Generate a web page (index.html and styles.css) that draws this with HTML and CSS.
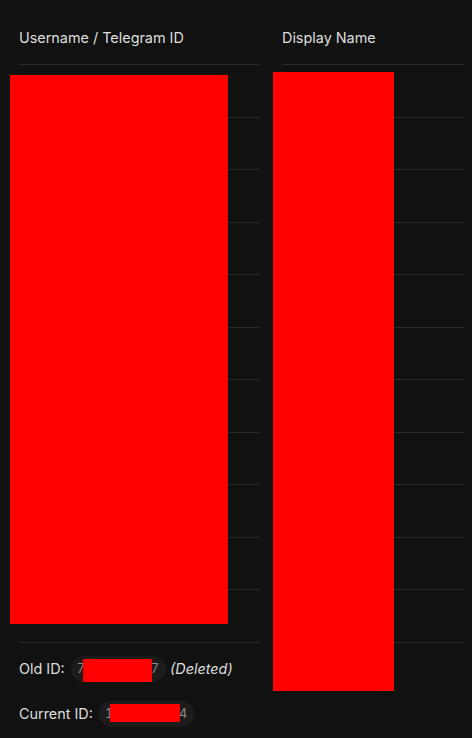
FILE: index.html
```html
<!DOCTYPE html>
<html lang="en">
<head>
<meta charset="utf-8">
<title>Users</title>
<link rel="stylesheet" href="styles.css">
</head>
<body>
<div class="page">
  <div class="table">
    <div class="cell head">Username / Telegram ID</div>
    <div class="cell head">Display Name</div>

    <div class="cell row"></div><div class="cell row"></div>
    <div class="cell row"></div><div class="cell row"></div>
    <div class="cell row"></div><div class="cell row"></div>
    <div class="cell row"></div><div class="cell row"></div>
    <div class="cell row"></div><div class="cell row"></div>
    <div class="cell row"></div><div class="cell row"></div>
    <div class="cell row"></div><div class="cell row"></div>
    <div class="cell row"></div><div class="cell row"></div>
    <div class="cell row"></div><div class="cell row"></div>
    <div class="cell row"></div><div class="cell row"></div>
    <div class="cell row"></div><div class="cell row"></div>

    <div class="cell last">
      <div class="idline">
        <span class="label">Old ID:</span>
        <span class="pill">7000000007</span>
        <span class="note">(Deleted)</span>
      </div>
      <div class="idline">
        <span class="label">Current ID:</span>
        <span class="pill">1000000004</span>
      </div>
    </div>
    <div class="cell last"></div>
  </div>

  <div class="redact r-left"></div>
  <div class="redact r-right"></div>
  <div class="redact r-old"></div>
  <div class="redact r-cur"></div>
</div>
</body>
</html>
```
FILE: styles.css
```css
html, body {
  margin: 0;
  padding: 0;
  background: #111111;
}

body {
  font-family: Inter, "Noto Sans", "Liberation Sans", sans-serif;
  color: #dedede;
}

.page {
  position: relative;
  width: 472px;
  height: 738px;
  overflow: hidden;
}

.table {
  display: grid;
  grid-template-columns: 241px 182px;
  column-gap: 22px;
  padding-left: 19px;
}

.cell {
  box-sizing: border-box;
  border-bottom: 1px solid #2a2a2a;
}

.head {
  height: 65px;
  padding-top: 28px;
  font-size: 14.4px;
  line-height: 20px;
  font-weight: 400;
  color: #dedede;
}

.row {
  height: 52.5px;
}

.last {
  border-bottom: none;
  padding-top: 13px;
  display: flex;
  flex-direction: column;
  gap: 19px;
}

.idline {
  display: flex;
  align-items: center;
  height: 26px;
  font-size: 14.4px;
  color: #dedede;
}

.label {
  margin-right: 6px;
}

.pill {
  display: inline-flex;
  align-items: center;
  height: 26px;
  padding: 0 7px 0 6px;
  border-radius: 13px;
  background: #1c1c1c;
  color: #8a8a8a;
  font-size: 12.7px;
  font-variant-numeric: tabular-nums;
}

.note {
  margin-left: 4px;
  font-style: italic;
  color: #dedede;
}

.redact {
  position: absolute;
  background: #ff0000;
}

.r-left {
  left: 10px;
  top: 75px;
  width: 218px;
  height: 549px;
}

.r-right {
  left: 273px;
  top: 72px;
  width: 121px;
  height: 619px;
}

.r-old {
  left: 83px;
  top: 659px;
  width: 69px;
  height: 23px;
}

.r-cur {
  left: 110px;
  top: 704px;
  width: 70px;
  height: 18px;
}
```
